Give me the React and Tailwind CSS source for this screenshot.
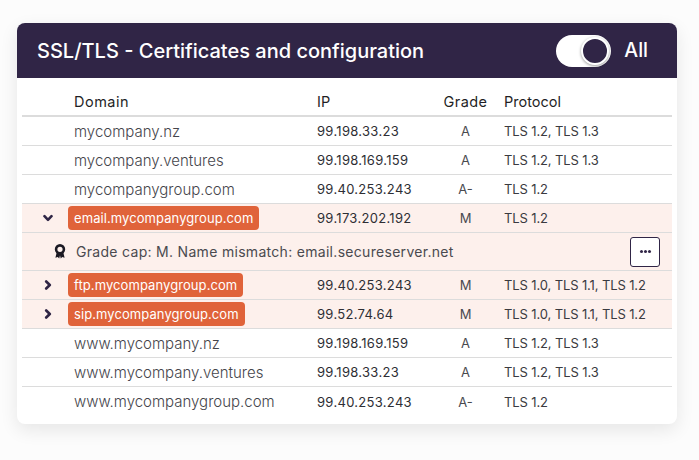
import React from "react";

const Chevron = ({ open }) => (
  <svg width="10" height="10" viewBox="0 0 10 10" fill="none" stroke="#2f2545" strokeWidth="2.6" strokeLinecap="round" strokeLinejoin="round">
    {open ? <path d="M1.5 3.2 5 6.8 8.5 3.2" /> : <path d="M3.2 1.5 6.8 5 3.2 8.5" />}
  </svg>
);

const Award = () => (
  <svg width="12" height="15" viewBox="0 0 12 15" fill="none">
    <path d="M2.8 8 1.4 13.8 3.8 13 5.2 14.6 6 11.5 6.8 14.6 8.2 13 10.6 13.8 9.2 8Z" fill="#1c1a24" />
    <circle cx="6" cy="5.3" r="3.9" fill="#fdf0ec" stroke="#1c1a24" strokeWidth="2.6" />
  </svg>
);

const rows = [
  { d: "mycompany.nz", ip: "99.198.33.23", g: "A", p: "TLS 1.2, TLS 1.3" },
  { d: "mycompany.ventures", ip: "99.198.169.159", g: "A", p: "TLS 1.2, TLS 1.3" },
  { d: "mycompanygroup.com", ip: "99.40.253.243", g: "A-", p: "TLS 1.2" },
  { d: "email.mycompanygroup.com", ip: "99.173.202.192", g: "M", p: "TLS 1.2", bad: true, open: true },
  { d: "ftp.mycompanygroup.com", ip: "99.40.253.243", g: "M", p: "TLS 1.0, TLS 1.1, TLS 1.2", bad: true },
  { d: "sip.mycompanygroup.com", ip: "99.52.74.64", g: "M", p: "TLS 1.0, TLS 1.1, TLS 1.2", bad: true },
  { d: "www.mycompany.nz", ip: "99.198.169.159", g: "A", p: "TLS 1.2, TLS 1.3" },
  { d: "www.mycompany.ventures", ip: "99.198.33.23", g: "A", p: "TLS 1.2, TLS 1.3" },
  { d: "www.mycompanygroup.com", ip: "99.40.253.243", g: "A-", p: "TLS 1.2", last: true },
];

const cols = "grid grid-cols-[52px_243px_110px_77px_1fr] items-center";

export default function App() {
  return (
    <div className="w-[699px] h-[460px] bg-[#fcfcfc] pt-[23px] pl-[17px] font-['Inter',sans-serif]">
      <div className="w-[660px] h-[401px] bg-white rounded-lg shadow-[0_6px_18px_rgba(0,0,0,0.09)] overflow-hidden">
        <div className="h-[55px] bg-[#302546] flex items-center pl-5 pr-[29px] text-white">
          <div className="text-[20px] font-medium flex-1">SSL/TLS - Certificates and configuration</div>
          <div className="relative w-[55px] h-8 rounded-full bg-white mr-[13px]">
            <div className="absolute right-[2px] top-[2px] w-7 h-7 rounded-full bg-[#302546] border-2 border-white shadow-[0_1px_3px_rgba(0,0,0,0.4)]" />
          </div>
          <div className="text-[19.5px] font-medium">All</div>
        </div>
        <div className="px-[5px] text-[13px] text-[#4a4a4f]">
          <div className={`${cols} h-[39px] pt-[10px] border-b-2 border-[#dcdcdc] text-[#1f1f26] text-[14.5px]`}>
            <div />
            <div className="tracking-[0.5px]">Domain</div>
            <div>IP</div>
            <div className="text-center tracking-[0.4px]">Grade</div>
            <div>Protocol</div>
          </div>
          {rows.map((r) => (
            <React.Fragment key={r.d}>
              <div className={`${cols} h-[29px] ${r.last ? "" : "border-b border-[#dcdcdc]"} ${r.bad ? "bg-[#fdf0ec]" : ""}`}>
                <div className="flex justify-center">{r.bad && <Chevron open={r.open} />}</div>
                <div>
                  {r.bad ? (
                    <span className="inline-block -ml-[6px] px-[6px] h-6 leading-6 rounded bg-[#e0633a] text-white tracking-[0.08px]">{r.d}</span>
                  ) : (
                    <span className="text-[15px] font-light text-[#45454b] relative top-px">{r.d}</span>
                  )}
                </div>
                <div className="tracking-[0.3px] text-[#2e2e34] relative top-px">{r.ip}</div>
                <div className="text-center relative top-px">{r.g}</div>
                <div className="tracking-[-0.12px] text-[#3a3a40] relative top-px">{r.p}</div>
              </div>
              {r.open && (
                <div className="h-[38px] bg-[#fdf0ec] border-b border-[#dcdcdc] flex items-center pl-[32px] pr-[12px] gap-[10px]">
                  <Award />
                  <div className="flex-1 text-[14px] tracking-[0.3px]">Grade cap: M. Name mismatch: email.secureserver.net</div>
                  <button className="w-[30px] h-[30px] bg-white border border-[#302546] rounded-[3px] flex items-center justify-center gap-[1px]">
                    <span className="w-[3px] h-[3px] rounded-full bg-[#302546]" />
                    <span className="w-[3px] h-[3px] rounded-full bg-[#302546]" />
                    <span className="w-[3px] h-[3px] rounded-full bg-[#302546]" />
                  </button>
                </div>
              )}
            </React.Fragment>
          ))}
        </div>
      </div>
    </div>
  );
}
